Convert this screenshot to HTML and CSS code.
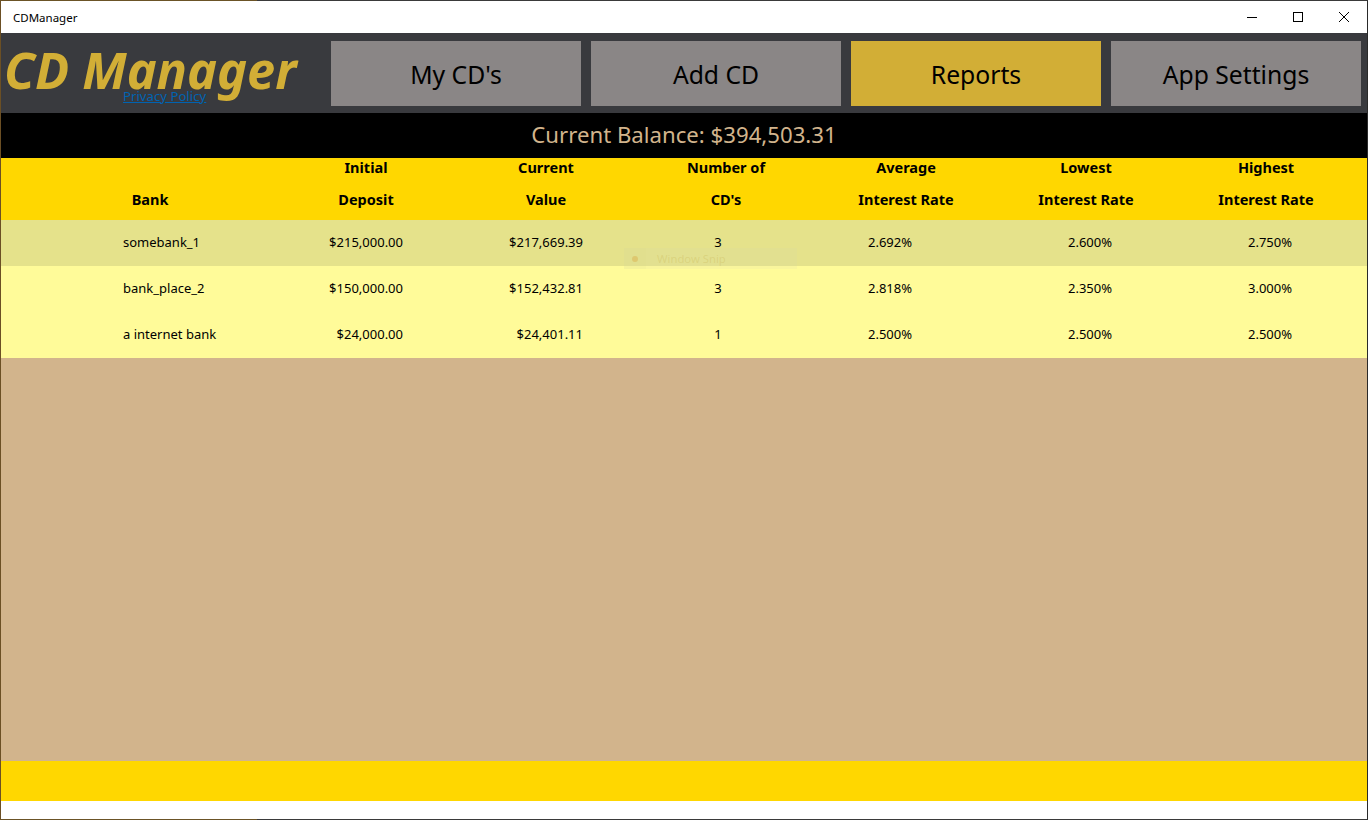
FILE: index.html
```html
<!DOCTYPE html>
<html lang="en">
<head>
<meta charset="utf-8">
<title>CDManager</title>
<link rel="stylesheet" href="styles.css">
</head>
<body>
<div class="window">
  <div class="titlebar">
    <span class="title">CDManager</span>
    <div class="controls">
      <span class="ctl"><svg width="12" height="12" viewBox="0 0 12 12"><path d="M1 6.5h10" stroke="#000" fill="none"/></svg></span>
      <span class="ctl"><svg width="12" height="12" viewBox="0 0 12 12"><rect x="1.5" y="1.5" width="9" height="9" stroke="#000" fill="none"/></svg></span>
      <span class="ctl"><svg width="12" height="12" viewBox="0 0 12 12"><path d="M1 1l10 10M11 1L1 11" stroke="#000" fill="none"/></svg></span>
    </div>
  </div>
  <header class="header">
    <div class="brand">
      <div class="logo">CD Manager</div>
      <a class="privacy" href="#">Privacy Policy</a>
    </div>
    <nav class="nav">
      <div class="btn">My CD's</div>
      <div class="btn">Add CD</div>
      <div class="btn active">Reports</div>
      <div class="btn">App Settings</div>
    </nav>
  </header>
  <div class="balance">Current Balance: $394,503.31</div>
  <div class="grid head">
    <div class="hc"><span></span><span>Bank</span></div>
    <div class="hc"><span>Initial</span><span>Deposit</span></div>
    <div class="hc"><span>Current</span><span>Value</span></div>
    <div class="hc"><span>Number of</span><span>CD's</span></div>
    <div class="hc"><span>Average</span><span>Interest Rate</span></div>
    <div class="hc"><span>Lowest</span><span>Interest Rate</span></div>
    <div class="hc"><span>Highest</span><span>Interest Rate</span></div>
  </div>
  <div class="grid row sel">
    <div class="c bank">somebank_1</div><div class="c money">$215,000.00</div><div class="c money">$217,669.39</div><div class="c num">3</div><div class="c avg">2.692%</div><div class="c rate">2.600%</div><div class="c rate">2.750%</div>
  </div>
  <div class="grid row">
    <div class="c bank">bank_place_2</div><div class="c money">$150,000.00</div><div class="c money">$152,432.81</div><div class="c num">3</div><div class="c avg">2.818%</div><div class="c rate">2.350%</div><div class="c rate">3.000%</div>
  </div>
  <div class="grid row">
    <div class="c bank">a internet bank</div><div class="c money">$24,000.00</div><div class="c money">$24,401.11</div><div class="c num">1</div><div class="c avg">2.500%</div><div class="c rate">2.500%</div><div class="c rate">2.500%</div>
  </div>
  <div class="fill"></div>
  <div class="footer"></div>
  <div class="bottom"></div>
  <div class="snip"><span class="snip-icon"><i class="dot"></i></span><span>Window Snip</span></div>
</div>
</body>
</html>
```
FILE: styles.css
```css
* { box-sizing: border-box; }
html, body { margin: 0; height: 100%; overflow: hidden; }
body { font-family: "Noto Sans", "Open Sans", sans-serif; color: #000; }
.window { position: relative; width: 1368px; height: 820px; border: 1px solid #3a3a3a; border-left-color: #6b4f24; border-right-color: #2a2a2a; display: flex; flex-direction: column; background: #fff; }
.window::before, .window::after { content: ""; position: absolute; left: -1px; width: 257px; height: 1px; background: #6b5326; }
.window::before { top: -1px; }
.window::after { bottom: -1px; }
.titlebar { height: 32px; display: flex; align-items: center; justify-content: space-between; background: #fff; flex: none; }
.title { font-size: 11.5px; padding-left: 12px; }
.controls { display: flex; }
.ctl { width: 46px; height: 32px; display: flex; align-items: center; justify-content: center; }
.header { height: 80px; background: #393a3e; display: flex; flex: none; }
.brand { width: 330px; position: relative; }
.logo { font-weight: 700; font-style: italic; font-size: 50.5px; color: #d2ae36; line-height: 74px; padding-left: 3px; white-space: nowrap; }
.privacy { position: absolute; left: 122px; top: 54px; font-size: 13.2px; line-height: 18px; color: #0063b1; }
.nav { display: flex; gap: 10px; padding-top: 8px; }
.btn { width: 250px; height: 65px; padding-top: 2px; background: #8a8686; font-size: 24.7px; display: flex; align-items: center; justify-content: center; }
.btn.active { background: #d2ae36; }
.balance { height: 45px; padding-bottom: 3px; background: #000; color: #d2b48c; font-size: 22.2px; display: flex; align-items: center; justify-content: center; flex: none; }
.grid { display: grid; grid-template-columns: 275px repeat(6, 180px) 1fr; flex: none; }
.head { height: 62px; background: #ffd700; }
.hc { display: flex; flex-direction: column; align-items: center; font-size: 14.5px; font-weight: 700; margin-top: -1px; }
.hc span { height: 32px; line-height: 20px; }
.hc:first-child { width: 298px; }
.row { height: 46px; background: #fffb99; font-size: 13px; align-items: center; padding-bottom: 2px; }
.row.sel { background: #e5e28b; }
.bank { padding-left: 122px; }
.money { text-align: right; padding-right: 53px; }
.num { text-align: center; padding-right: 16px; }
.avg { text-align: center; padding-right: 32px; }
.rate { text-align: center; padding-left: 8px; }
.fill { flex: 1; background: #d2b48c; }
.footer { height: 40px; background: #ffd700; flex: none; }
.bottom { height: 18px; background: #fff; flex: none; }
.snip { position: absolute; left: 623px; top: 247px; width: 173px; height: 21px; background: rgba(215, 215, 175, 0.14); display: flex; align-items: center; font-size: 11.3px; color: rgba(190, 165, 60, 0.22); }
.snip-icon { width: 22px; height: 21px; background: rgba(215, 215, 130, 0.1); display: flex; align-items: center; justify-content: center; margin-right: 11px; }
.dot { width: 6px; height: 6px; border-radius: 50%; background: rgba(215, 150, 40, 0.3); }
```
